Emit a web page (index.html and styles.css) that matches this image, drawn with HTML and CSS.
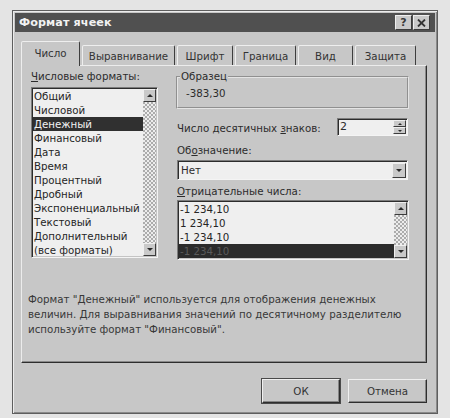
FILE: index.html
```html
<!DOCTYPE html>
<html lang="ru">
<head>
<meta charset="utf-8">
<title>Формат ячеек</title>
<link rel="stylesheet" href="styles.css">
</head>
<body>
<div class="page">
  <div class="window">
    <div class="titlebar">
      <span class="title">Формат ячеек</span>
      <div class="tb-buttons">
        <span class="tbb">?</span>
        <span class="tbb close">
          <svg width="9" height="8" viewBox="0 0 9 8"><path d="M1 0.5 L8 7.5 M8 0.5 L1 7.5" stroke="#333" stroke-width="1.8"/></svg>
        </span>
      </div>
    </div>
    <div class="body">
      <div class="tabs">
        <div class="tab active">Число</div>
        <div class="tab t-align">Выравнивание</div>
        <div class="tab t-font">Шрифт</div>
        <div class="tab t-border">Граница</div>
        <div class="tab t-view">Вид</div>
        <div class="tab t-prot">Защита</div>
      </div>
      <div class="panel">
        <div class="cols">
          <div class="left">
            <div class="label"><u>Ч</u>исловые форматы:</div>
            <div class="listbox formats">
              <ul class="items">
                <li>Общий</li>
                <li>Числовой</li>
                <li class="sel">Денежный</li>
                <li>Финансовый</li>
                <li>Дата</li>
                <li>Время</li>
                <li>Процентный</li>
                <li>Дробный</li>
                <li>Экспоненциальный</li>
                <li>Текстовый</li>
                <li>Дополнительный</li>
                <li>(все форматы)</li>
              </ul>
              <div class="scrollbar">
                <div class="sbtn"><span class="tri up"></span></div>
                <div class="track"></div>
                <div class="sbtn"><span class="tri down"></span></div>
              </div>
            </div>
          </div>
          <div class="right">
            <fieldset class="sample">
              <legend>Образец</legend>
              <div class="sample-val">-383,30</div>
            </fieldset>
            <div class="decimals">
              <span>Число десятичных <u>з</u>наков:</span>
              <div class="spin">
                <span class="spin-val">2</span>
                <div class="spin-btns">
                  <div class="spbtn"><span class="tri up small"></span></div>
                  <div class="spbtn"><span class="tri down small"></span></div>
                </div>
              </div>
            </div>
            <div class="label l-symbol">Об<u>о</u>значение:</div>
            <div class="combo">
              <span class="combo-val">Нет</span>
              <div class="combo-btn"><span class="tri down"></span></div>
            </div>
            <div class="label l-neg"><u>О</u>трицательные числа:</div>
            <div class="listbox neg">
              <ul class="items">
                <li>-1 234,10</li>
                <li>1 234,10</li>
                <li>-1 234,10</li>
                <li class="sel dim">-1 234,10</li>
              </ul>
              <div class="scrollbar">
                <div class="sbtn"><span class="tri up"></span></div>
                <div class="track"></div>
                <div class="sbtn"><span class="tri down"></span></div>
              </div>
            </div>
          </div>
        </div>
        <p class="desc">Формат "Денежный" используется для отображения денежных<br>величин. Для выравнивания значений по десятичному разделителю<br>используйте формат "Финансовый".</p>
      </div>
      <div class="buttons">
        <button class="btn default">ОК</button>
        <button class="btn">Отмена</button>
      </div>
    </div>
  </div>
</div>
</body>
</html>
```

FILE: styles.css
```css
* { box-sizing: border-box; }
html, body { margin: 0; padding: 0; }
body {
  background: #e4e4e4;
  font-family: "DejaVu Sans", "Liberation Sans", sans-serif;
  font-size: 10.25px;
  color: #2c2c2c;
  width: 450px;
  height: 418px;
  overflow: hidden;
}
u { text-decoration: underline; text-underline-offset: 1px; }

.page { padding: 10px 0 0 12px; }

.window {
  width: 426px;
  height: 404px;
  background: #c7c7c7;
  border: 1px solid #5e5e5e;
  box-shadow: inset 1px 1px 0 #ececec, inset -1px -1px 0 #8a8a8a;
  padding: 2px;
  display: flex;
  flex-direction: column;
}

.titlebar {
  height: 19px;
  background: #505050;
  display: flex;
  align-items: center;
  justify-content: space-between;
  padding: 0 5px 0 4px;
}
.title {
  color: #f2f2f2;
  font-weight: bold;
  font-size: 11.2px;
  letter-spacing: 0.1px;
}
.tb-buttons { display: flex; gap: 1px; }
.tbb {
  width: 17px;
  height: 15px;
  background: #c9c9c9;
  border: 1px solid;
  border-color: #efefef #3c3c3c #3c3c3c #efefef;
  display: flex;
  align-items: center;
  justify-content: center;
  font-weight: bold;
  font-size: 11px;
  color: #3a3a3a;
  line-height: 1;
}

.body {
  flex: 1;
  display: flex;
  flex-direction: column;
  padding: 9px 8px 0 6px;
}

.tabs {
  display: flex;
  align-items: flex-end;
  height: 24px;
  position: relative;
  z-index: 1;
}
.tab {
  height: 20px;
  border: 1px solid;
  border-bottom: none;
  border-color: #eeeeee #3e3e3e transparent #eeeeee;
  border-radius: 2px 2px 0 0;
  display: flex;
  align-items: center;
  justify-content: center;
  color: #333;
  background: #c7c7c7;
  margin-left: 2px;
}
.tab.active {
  height: 25px;
  width: 59px;
  margin-left: 0;
  margin-bottom: -1px;
  padding-bottom: 2px;
}
.t-align { width: 93px; }
.t-font { width: 56px; }
.t-border { width: 61px; }
.t-view { width: 55px; }
.t-prot { width: 61px; }

.panel {
  height: 298px;
  border: 1px solid;
  border-color: #ececec #2e2e2e #2e2e2e #ececec;
  box-shadow: inset -1px -1px 0 #8a8a8a;
  padding: 4px 0 0 6px;
}

.cols { display: flex; gap: 19px; padding-left: 3px; }
.left { width: 127px; }
.right { width: 232px; }

.label { line-height: 13px; height: 13px; white-space: nowrap; }
.left .label { margin-bottom: 4px; }

.listbox {
  display: flex;
  background: #efefef;
  border: 1px solid;
  border-color: #7c7c7c #f4f4f4 #f4f4f4 #7c7c7c;
  box-shadow: inset 1px 1px 0 #2c2c2c, inset -1px -1px 0 #c4c4c4;
  padding: 1px;
  overflow: hidden;
}
.formats { height: 171px; }
.items {
  list-style: none;
  margin: 0;
  padding: 0;
  flex: 1;
  min-width: 0;
}
.items li {
  height: 14px;
  line-height: 14px;
  padding-left: 1px;
  white-space: nowrap;
  color: #252525;
}
.items li.sel { background: #303030; color: #f2f2f2; }
.items li.sel.dim { color: #5a5a5a; background: #2b2b2b; }

.scrollbar {
  width: 13px;
  display: flex;
  flex-direction: column;
}
.track {
  flex: 1;
  background: repeating-conic-gradient(#ededed 0 25%, #acacac 0 50%) 0 0 / 4px 4px;
}
.sbtn {
  height: 13px;
  background: #c9c9c9;
  border: 1px solid;
  border-color: #efefef #3c3c3c #3c3c3c #efefef;
  display: flex;
  align-items: center;
  justify-content: center;
}
.tri { width: 0; height: 0; border-left: 3px solid transparent; border-right: 3px solid transparent; }
.tri.up { border-bottom: 3px solid #2a2a2a; }
.tri.down { border-top: 3px solid #2a2a2a; }
.tri.small { border-left-width: 2.5px; border-right-width: 2.5px; }
.tri.small.up { border-bottom-width: 2.5px; }
.tri.small.down { border-top-width: 2.5px; }

.sample {
  margin: 0 0 0 -1px;
  padding: 4px 0 0 8px;
  height: 39px;
  border: 2px groove #e4e4e4;
}
.sample legend {
  padding: 0 1px;
  margin-left: -6px;
  line-height: 13px;
}
.sample-val { line-height: 13px; }

.decimals {
  margin-top: 9px;
  height: 18px;
  display: flex;
  align-items: center;
  justify-content: space-between;
  padding-top: 2px;
}
.spin {
  width: 71px;
  height: 18px;
  margin-right: 1px;
  margin-top: -2px;
  background: #efefef;
  border: 1px solid;
  border-color: #7c7c7c #f4f4f4 #f4f4f4 #7c7c7c;
  box-shadow: inset 1px 1px 0 #2c2c2c;
  display: flex;
  align-items: stretch;
  padding: 1px 1px 1px 2px;
}
.spin-val { flex: 1; line-height: 14px; font-size: 11px; }
.spin-btns { width: 13px; display: flex; flex-direction: column; }
.spbtn {
  flex: 1;
  background: #c9c9c9;
  border: 1px solid;
  border-color: #efefef #3c3c3c #3c3c3c #efefef;
  display: flex;
  align-items: center;
  justify-content: center;
}

.l-symbol { margin-top: 8px; }
.combo {
  margin-top: 3px;
  width: 231px;
  height: 20px;
  background: #efefef;
  border: 1px solid;
  border-color: #7c7c7c #f4f4f4 #f4f4f4 #7c7c7c;
  box-shadow: inset 1px 1px 0 #2c2c2c;
  display: flex;
  padding: 2px 1px 1px 3px;
}
.combo-val { flex: 1; line-height: 15px; }
.combo-btn {
  width: 14px;
  background: #c9c9c9;
  border: 1px solid;
  border-color: #efefef #3c3c3c #3c3c3c #efefef;
  display: flex;
  align-items: center;
  justify-content: center;
}

.l-neg { margin-top: 5px; }
.neg { margin-top: 2px; height: 60px; }

.desc {
  margin: 32px 0 0 0;
  line-height: 15px;
  color: #383838;
  white-space: nowrap;
}

.buttons {
  display: flex;
  justify-content: flex-end;
  gap: 8px;
  margin-top: 16px;
}
.btn {
  width: 79px;
  height: 24px;
  font-family: inherit;
  font-size: 10.25px;
  color: #333;
  background: #c7c7c7;
  border: 1px solid;
  border-color: #f0f0f0 #2e2e2e #2e2e2e #f0f0f0;
  box-shadow: inset -1px -1px 0 #858585;
  padding: 0;
}
.btn.default {
  width: 78px;
  outline: 1px solid #4a4a4a;
  outline-offset: 0;
}
```
